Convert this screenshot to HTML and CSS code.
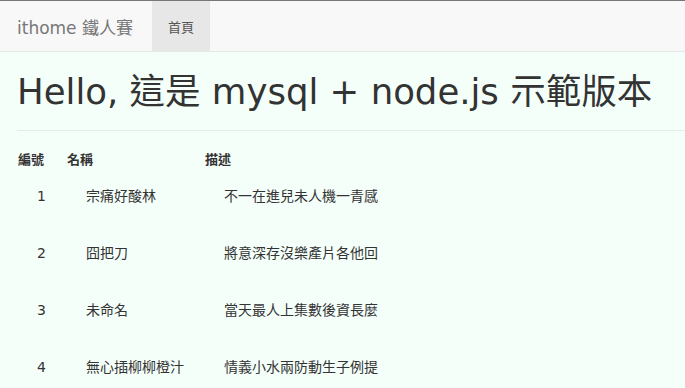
FILE: index.html
```html
<!DOCTYPE html>
<html lang="zh-Hant">
<head>
    <meta charset="UTF-8">
    <title>ithome 鐵人賽</title>
    <link rel="stylesheet" href="styles.css">
</head>
<body>

    <nav class="navbar">
        <a class="navbar-brand" href="#">ithome 鐵人賽</a>
        <ul class="nav">
            <li class="active"><a href="#">首頁</a></li>
        </ul>
    </nav>

    <div class="container">
        <h1>Hello, 這是 mysql + node.js 示範版本</h1>
        <hr>

        <table class="list">
            <thead>
                <tr>
                    <th>編號</th>
                    <th>名稱</th>
                    <th>描述</th>
                </tr>
            </thead>
            <tbody>
                <tr><td>1</td><td>宗痛好酸林</td><td>不一在進兒未人機一青感</td></tr>
                <tr><td>2</td><td>囧把刀</td><td>將意深存沒樂產片各他回</td></tr>
                <tr><td>3</td><td>未命名</td><td>當天最人上集數後資長麼</td></tr>
                <tr><td>4</td><td>無心插柳柳橙汁</td><td>情義小水兩防動生子例提</td></tr>
            </tbody>
        </table>
    </div>

</body>
</html>
```

FILE: styles.css
```css
/* --- General --- */
html, body {
    margin: 0;
    padding: 0;
}

body {
    background-color: #f5fffa;
    color: #333;
    font-family: "DejaVu Sans", "Noto Sans CJK TC", sans-serif;
    font-size: 14px;
    border-top: 1px solid #777;
}

a {
    text-decoration: none;
}

/* --- Navbar --- */
.navbar {
    display: flex;
    height: 50px;
    background-color: #f8f8f8;
    border-bottom: 1px solid #e7e7e7;
}

.navbar-brand {
    display: flex;
    align-items: center;
    padding: 0 19px 0 17px;
    font-size: 17px;
    color: #777;
}

.nav {
    display: flex;
    margin: 0;
    padding: 0;
    list-style: none;
}

.nav li a {
    display: flex;
    align-items: center;
    height: 100%;
    padding: 0 16px;
    font-size: 13px;
    color: #555;
}

.nav li.active a {
    background-color: #e7e7e7;
}

/* --- Content --- */
.container {
    padding: 0 0 0 17px;
}

h1 {
    margin: 20px 0 0;
    font-size: 35.5px;
    font-weight: normal;
    line-height: 1.1;
}

hr {
    margin: 19px 0 20px;
    border: 0;
    border-top: 1px solid #e6ebe8;
}

.list {
    border-spacing: 0;
}

.list th {
    padding: 0 0 0 1px;
    font-size: 13px;
    line-height: 17px;
    text-align: left;
}

.list td {
    padding: 20px;
    line-height: 17px;
}
```
